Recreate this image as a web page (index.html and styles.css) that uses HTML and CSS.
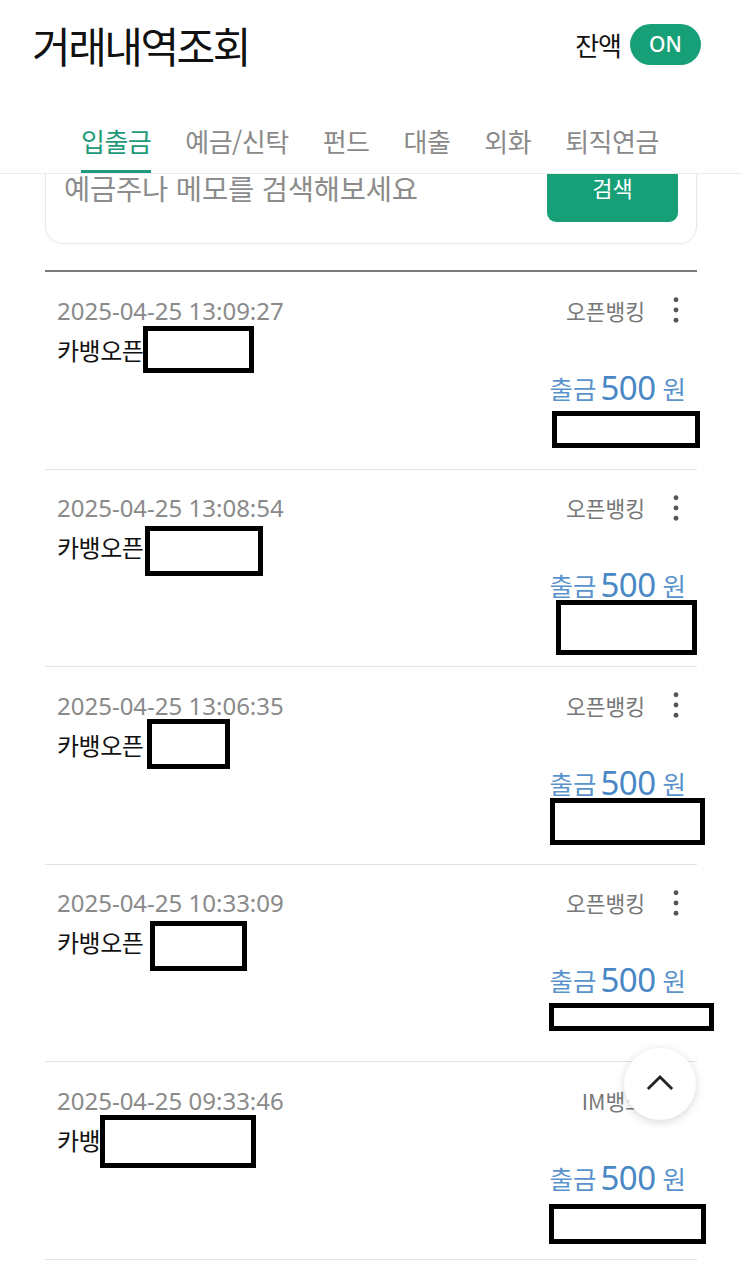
FILE: index.html
```html
<!DOCTYPE html>
<html lang="ko">
<head>
  <meta charset="UTF-8">
  <meta name="viewport" content="width=device-width, initial-scale=1.0">
  <title>거래내역조회</title>
  <link rel="stylesheet" href="styles.css">
</head>
<body>
  <header class="header">
    <div class="title-bar">
      <h1 class="title">거래내역조회</h1>
      <div class="balance">
        <span class="balance-label">잔액</span>
        <span class="toggle">ON</span>
      </div>
    </div>
    <nav class="tabs">
      <a class="tab active">입출금</a>
      <a class="tab">예금/신탁</a>
      <a class="tab">펀드</a>
      <a class="tab">대출</a>
      <a class="tab">외화</a>
      <a class="tab">퇴직연금</a>
    </nav>
  </header>

  <main class="content">
    <!-- 검색 (헤더 아래로 스크롤된 상태) -->
    <div class="search-card">
      <span class="search-placeholder">예금주나 메모를 검색해보세요</span>
      <button class="search-btn">검색</button>
    </div>

    <!-- 거래내역 목록 -->
    <ul class="tx-list">
      <li class="tx">
        <div class="tx-top">
          <span class="tx-date">2025-04-25 13:09:27</span>
          <span class="tx-bank">오픈뱅킹</span>
          <svg class="kebab" viewBox="0 0 6 28"><circle cx="3" cy="3" r="2.6"/><circle cx="3" cy="14" r="2.6"/><circle cx="3" cy="25" r="2.6"/></svg>
        </div>
        <div class="tx-name">카뱅오픈<span class="mask mask-n1"></span></div>
        <div class="tx-amount"><span class="kind">출금</span><span class="num">500</span><span class="unit">원</span></div>
        <div class="tx-memo"><span class="mask mask-a1"></span></div>
      </li>
      <li class="tx">
        <div class="tx-top">
          <span class="tx-date">2025-04-25 13:08:54</span>
          <span class="tx-bank">오픈뱅킹</span>
          <svg class="kebab" viewBox="0 0 6 28"><circle cx="3" cy="3" r="2.6"/><circle cx="3" cy="14" r="2.6"/><circle cx="3" cy="25" r="2.6"/></svg>
        </div>
        <div class="tx-name">카뱅오픈<span class="mask mask-n2"></span></div>
        <div class="tx-amount"><span class="kind">출금</span><span class="num">500</span><span class="unit">원</span></div>
        <div class="tx-memo"><span class="mask mask-a2"></span></div>
      </li>
      <li class="tx">
        <div class="tx-top">
          <span class="tx-date">2025-04-25 13:06:35</span>
          <span class="tx-bank">오픈뱅킹</span>
          <svg class="kebab" viewBox="0 0 6 28"><circle cx="3" cy="3" r="2.6"/><circle cx="3" cy="14" r="2.6"/><circle cx="3" cy="25" r="2.6"/></svg>
        </div>
        <div class="tx-name">카뱅오픈<span class="mask mask-n3"></span></div>
        <div class="tx-amount"><span class="kind">출금</span><span class="num">500</span><span class="unit">원</span></div>
        <div class="tx-memo"><span class="mask mask-a3"></span></div>
      </li>
      <li class="tx">
        <div class="tx-top">
          <span class="tx-date">2025-04-25 10:33:09</span>
          <span class="tx-bank">오픈뱅킹</span>
          <svg class="kebab" viewBox="0 0 6 28"><circle cx="3" cy="3" r="2.6"/><circle cx="3" cy="14" r="2.6"/><circle cx="3" cy="25" r="2.6"/></svg>
        </div>
        <div class="tx-name">카뱅오픈<span class="mask mask-n4"></span></div>
        <div class="tx-amount"><span class="kind">출금</span><span class="num">500</span><span class="unit">원</span></div>
        <div class="tx-memo"><span class="mask mask-a4"></span></div>
      </li>
      <li class="tx">
        <div class="tx-top">
          <span class="tx-date">2025-04-25 09:33:46</span>
          <span class="tx-bank">IM뱅크</span>
          <svg class="kebab" viewBox="0 0 6 28"><circle cx="3" cy="3" r="2.6"/><circle cx="3" cy="14" r="2.6"/><circle cx="3" cy="25" r="2.6"/></svg>
        </div>
        <div class="tx-name">카뱅<span class="mask mask-n5"></span></div>
        <div class="tx-amount"><span class="kind">출금</span><span class="num">500</span><span class="unit">원</span></div>
        <div class="tx-memo"><span class="mask mask-a5"></span></div>
      </li>
    </ul>
  </main>

  <!-- 맨 위로 버튼 -->
  <button class="to-top" aria-label="맨 위로">
    <svg viewBox="0 0 30 18"><polyline points="2,16 15,3 28,16"/></svg>
  </button>
</body>
</html>
```

FILE: styles.css
```css
/* 기본 설정 */
body {
  margin: 0;
  background: #fff;
  font-family: "Noto Sans CJK KR", sans-serif;
  color: #111;
}
ul {
  list-style: none;
  margin: 0;
  padding: 0;
}
button {
  font-family: inherit;
  border: none;
  cursor: pointer;
}

/* 헤더 */
.header {
  position: relative;
  z-index: 2;
  background: #fff;
  border-bottom: 1px solid #ececec;
}
.title-bar {
  height: 88px;
  display: flex;
  align-items: center;
  justify-content: space-between;
  padding: 0 41px 0 32px;
}
.title {
  margin: 0;
  font-size: 42px;
  font-weight: 400;
  letter-spacing: -2.5px;
  color: #111;
}
.balance {
  display: flex;
  align-items: center;
  gap: 9px;
}
.balance-label {
  font-size: 26px;
  letter-spacing: -1px;
  color: #111;
}
.toggle {
  width: 71px;
  height: 41px;
  border-radius: 21px;
  background: #17a078;
  color: #fff;
  font-family: "Noto Sans", sans-serif;
  font-size: 21px;
  font-weight: 500;
  display: flex;
  align-items: center;
  justify-content: center;
}

/* 탭 */
.tabs {
  height: 85px;
  display: flex;
  align-items: flex-end;
  gap: 34px;
  padding-left: 81px;
}
.tab {
  font-size: 26px;
  letter-spacing: -0.5px;
  line-height: 36px;
  color: #8a8a8a;
  padding-bottom: 11px;
  border-bottom: 3px solid transparent;
}
.tab.active {
  color: #1e9a78;
  border-bottom-color: #1e9a78;
}

/* 본문 */
.content {
  margin-top: -44px;
  padding: 0 45px;
}
.search-card {
  display: flex;
  align-items: center;
  justify-content: space-between;
  padding: 21px 18px;
  border: 1px solid #e8e8e8;
  border-radius: 18px;
  box-shadow: 0 1px 3px rgba(0,0,0,0.04);
}
.search-placeholder {
  font-size: 28.5px;
  letter-spacing: -0.2px;
  color: #8c8c8c;
}
.search-btn {
  width: 131px;
  height: 70px;
  border-radius: 9px;
  background: #17a078;
  color: #fff;
  font-size: 22px;
}

/* 거래내역 */
.tx-list {
  margin-top: 26px;
  border-top: 2px solid #7b7b7b;
}
.tx {
  height: 197.5px;
  box-sizing: border-box;
  padding: 0 11px 0 12px;
  border-bottom: 1.5px solid #e3e3e3;
}
.tx-top {
  height: 28px;
  padding-top: 24px;
  display: flex;
  align-items: center;
}
.tx-date {
  flex: 1;
  font-family: "Noto Sans", sans-serif;
  font-size: 24px;
  color: #8a8a8a;
}
.tx-bank {
  font-size: 21.5px;
  color: #777;
}
.kebab {
  width: 6px;
  height: 26px;
  margin: 0 7px 0 28px;
  fill: #555;
}
.tx-name {
  height: 36px;
  margin-top: 7px;
  display: flex;
  align-items: center;
  font-size: 24px;
  letter-spacing: -0.5px;
  color: #111;
}
.tx-amount {
  height: 36px;
  margin-top: 2px;
  display: flex;
  align-items: center;
  justify-content: flex-end;
  color: #4a87c5;
  font-size: 25.5px;
}
.tx-amount .kind {
  color: #5a93cc;
}
.tx-amount .num {
  font-family: "Noto Sans", sans-serif;
  font-size: 33px;
  margin: 0 7px 0 4px;
  letter-spacing: -0.5px;
}
.tx-amount .unit {
  color: #5a93cc;
}
.tx-memo {
  display: flex;
  justify-content: flex-end;
}

/* 가림 처리 박스 */
.mask {
  display: block;
  flex: none;
  box-sizing: border-box;
  border: 5px solid #000;
  background: #fff;
}
.mask-n1 { width: 111px; height: 47px; }
.mask-n2 { width: 118px; height: 50px; margin: 8px 0 0 2px; }
.mask-n3 { width: 83px; height: 50px; margin-left: 4px; }
.mask-n4 { width: 97px; height: 50px; margin: 8px 0 0 7px; }
.mask-n5 { width: 156px; height: 53px; margin-top: 5px; }
.mask-a1 { width: 148px; height: 37px; margin: 6px -14px 0 0; }
.mask-a2 { width: 141px; height: 55px; margin: -3px -11px 0 0; }
.mask-a3 { width: 155px; height: 47px; margin: -2px -19px 0 0; }
.mask-a4 { width: 165px; height: 28px; margin: 5px -28px 0 0; }
.mask-a5 { width: 157px; height: 40px; margin: 9px -20px 0 0; }

/* 맨 위로 버튼 */
.to-top {
  position: fixed;
  right: 46px;
  bottom: 160px;
  width: 72px;
  height: 72px;
  border-radius: 50%;
  background: #fff;
  box-shadow: 0 2px 10px rgba(0,0,0,0.16);
  display: flex;
  align-items: center;
  justify-content: center;
}
.to-top svg {
  width: 28px;
  height: 17px;
  fill: none;
  stroke: #222;
  stroke-width: 3;
  margin-top: -4px;
}
```
